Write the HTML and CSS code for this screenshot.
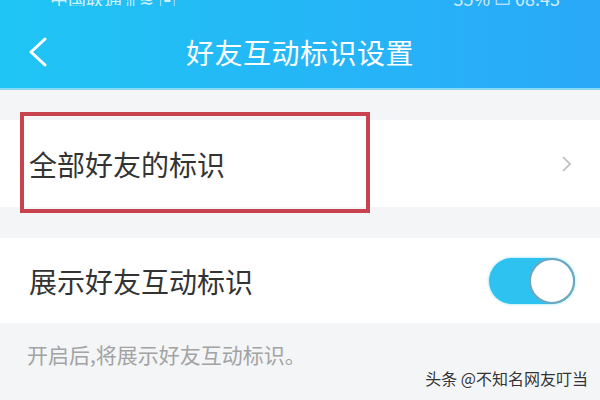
FILE: index.html
```html
<!DOCTYPE html>
<html lang="zh-CN">
<head>
    <meta charset="UTF-8">
    <title>好友互动标识设置</title>
    <link rel="stylesheet" href="styles.css">
</head>
<body>

<div class="page">
    <div class="header">
        <div class="status">
            <span class="status-left">中国联通 ᵢₗₗ ≋ ▣</span>
            <span class="status-right">35% ▭ 08:43</span>
        </div>
        <div class="nav">
            <svg class="back" width="20" height="30" viewBox="0 0 20 30">
                <polyline points="17,2 3,15 17,28" fill="none" stroke="#fff" stroke-width="3" stroke-linecap="round" stroke-linejoin="round"/>
            </svg>
            <h1 class="title">好友互动标识设置</h1>
        </div>
    </div>

    <div class="row row-link">
        <span class="label">全部好友的标识</span>
        <svg class="arrow" width="12" height="16" viewBox="0 0 12 16">
            <polyline points="3,1 10,8 3,15" fill="none" stroke="#b8b8b8" stroke-width="1.6"/>
        </svg>
        <div class="mark"></div>
    </div>

    <div class="row row-switch">
        <span class="label">展示好友互动标识</span>
        <div class="switch on"><span class="knob"></span></div>
    </div>

    <p class="hint">开启后,将展示好友互动标识。</p>

    <div class="watermark">头条 @不知名网友叮当</div>
</div>

</body>
</html>
```

FILE: styles.css
```css
body {
    margin: 0;
    font-family: "Noto Sans CJK SC", "Noto Sans", sans-serif;
    background-color: #f4f5f7;
}
.page {
    position: relative;
    width: 600px;
    height: 400px;
    overflow: hidden;
    background-color: #f4f5f7;
}
.header {
    height: 90px;
    background: linear-gradient(90deg, #1fc5f4, #2aa9f9);
    box-shadow: inset 0 -2px 0 #8ad8f6;
}
.status {
    height: 6px;
    overflow: hidden;
    display: flex;
    justify-content: space-between;
    align-items: flex-end;
    padding: 0 40px 0 50px;
    color: rgba(255,255,255,0.8);
    font-size: 18px;
    line-height: 18px;
}
.status span {
    margin-bottom: -1px;
}
.nav {
    height: 84px;
    display: flex;
    align-items: center;
    justify-content: center;
    position: relative;
}
.back {
    position: absolute;
    left: 28px;
    top: 31px;
}
.title {
    margin: 0;
    margin-top: 8px;
    font-size: 28px;
    font-weight: normal;
    color: #fff;
    letter-spacing: 0.5px;
}
.row {
    display: flex;
    align-items: center;
    justify-content: space-between;
    background-color: #fff;
    padding: 0 25px 0 29px;
    position: relative;
}
.row-link {
    margin-top: 30px;
    height: 87px;
}
.row-switch {
    margin-top: 31px;
    height: 85px;
}
.label {
    font-size: 28px;
    color: #333;
}
.arrow {
    margin-right: 3px;
}
.mark {
    position: absolute;
    left: 20px;
    top: -8px;
    width: 342px;
    height: 93px;
    border: 4px solid #c8434d;
}
.switch {
    width: 86px;
    height: 46px;
    border-radius: 23px;
    background-color: #2ec2f1;
    box-shadow: 0 0 3px rgba(46,194,241,0.6);
    display: flex;
    justify-content: flex-end;
    align-items: center;
}
.knob {
    width: 42px;
    height: 42px;
    border-radius: 50%;
    background-color: #fff;
    border: 2px solid #6fa6bd;
}
.hint {
    margin: 16px 0 0 27px;
    font-size: 21px;
    color: #a3a3a3;
}
.watermark {
    position: absolute;
    right: 12px;
    bottom: 10px;
    font-size: 16px;
    color: #333;
    text-shadow: 0 0 2px #fff;
}
```
